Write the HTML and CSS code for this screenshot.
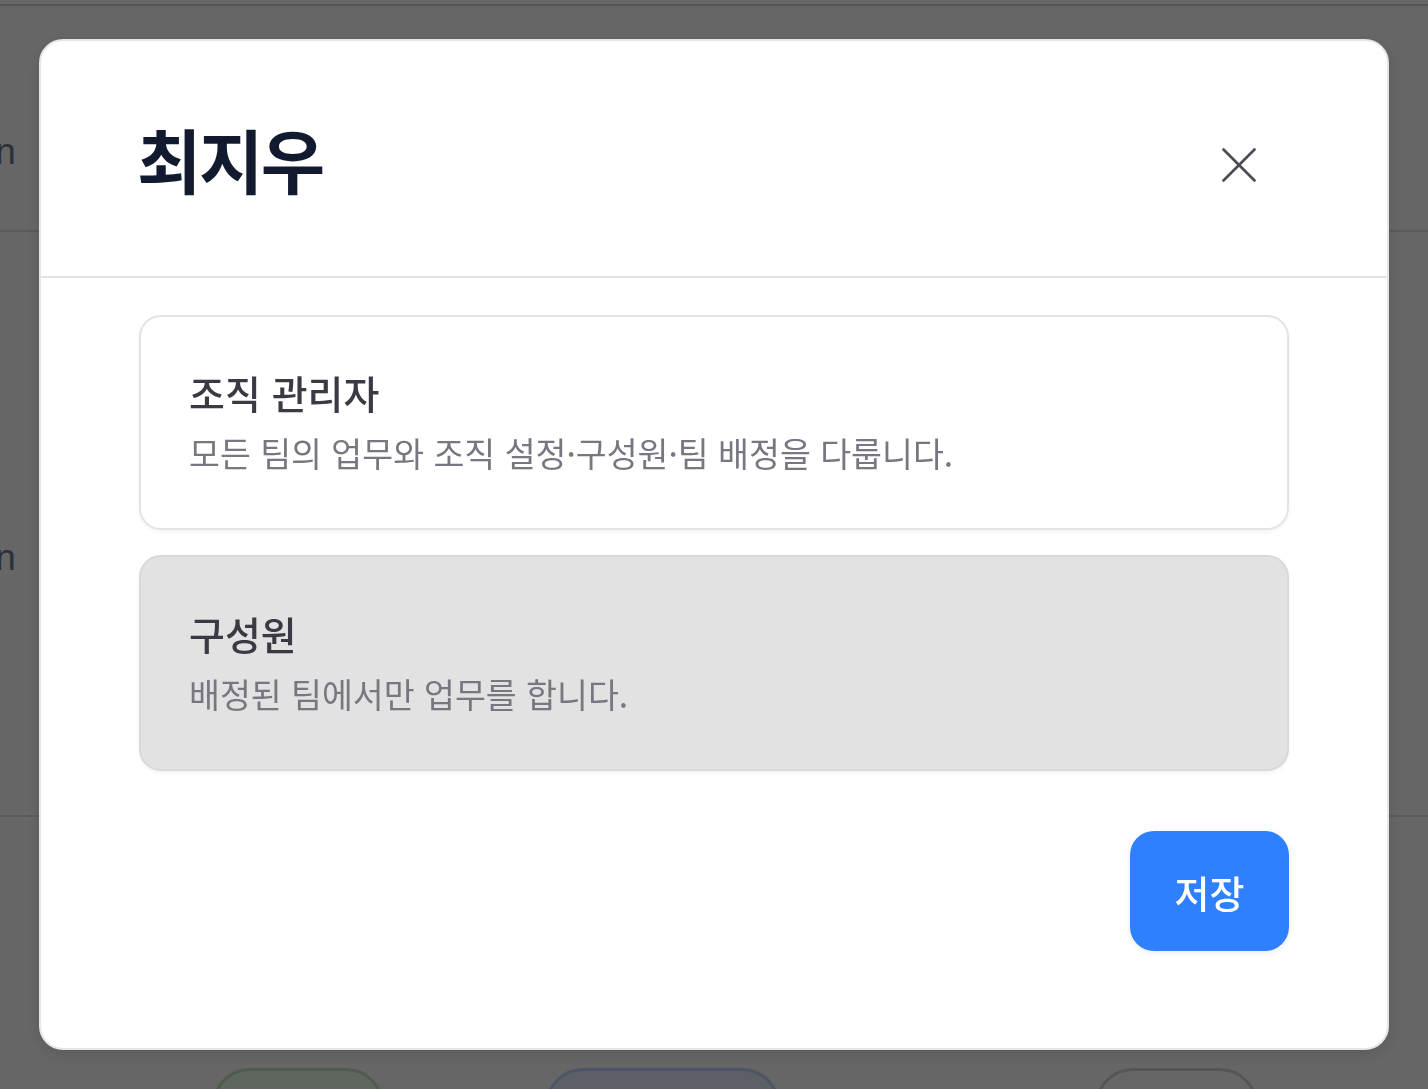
FILE: index.html
```html
<!DOCTYPE html>
<html lang="ko">
<head>
<meta charset="utf-8">
<title>역할 변경</title>
<link rel="stylesheet" href="styles.css">
</head>
<body>
<div class="page">
  <div class="topbar"></div>
  <div class="row row-a"><span class="cell-text">Admin</span></div>
  <div class="row row-b"><span class="cell-text">Admin</span></div>
  <div class="actions">
    <span class="pill pill-green"></span>
    <span class="pill pill-blue"></span>
    <span class="pill pill-gray"></span>
  </div>
</div>

<div class="overlay">
  <div class="modal" role="dialog" aria-modal="true">
    <div class="modal-header">
      <h2 class="modal-title">최지우</h2>
      <button class="close-btn" aria-label="닫기">
        <svg width="34" height="34" viewBox="0 0 34 34" fill="none" stroke="currentColor" stroke-width="2.6" stroke-linecap="round">
          <line x1="1.5" y1="1.5" x2="32.5" y2="32.5"/>
          <line x1="32.5" y1="1.5" x2="1.5" y2="32.5"/>
        </svg>
      </button>
    </div>
    <div class="modal-body">
      <div class="option">
        <div class="option-title">조직 관리자</div>
        <div class="option-desc">모든 팀의 업무와 조직 설정·구성원·팀 배정을 다룹니다.</div>
      </div>
      <div class="option option-selected">
        <div class="option-title">구성원</div>
        <div class="option-desc">배정된 팀에서만 업무를 합니다.</div>
      </div>
    </div>
    <div class="modal-footer">
      <button class="save-btn">저장</button>
    </div>
  </div>
</div>
</body>
</html>
```

FILE: styles.css
```css
* { box-sizing: border-box; }

html, body {
  margin: 0;
  padding: 0;
  height: 100%;
  overflow: hidden;
}

body {
  font-family: "Noto Sans CJK KR", "Noto Sans", sans-serif;
  background: #ffffff;
}

/* background page (dimmed by the overlay) */
.page {
  display: flex;
  flex-direction: column;
  height: 1089px;
  overflow: hidden;
}

.topbar {
  flex-shrink: 0;
  height: 6px;
  border-bottom: 2px solid #d4d4d4;
}

.row {
  flex-shrink: 0;
  display: flex;
  align-items: flex-start;
  border-bottom: 2px solid #e2e2e2;
}

.row-a { height: 226px; }
.row-b { height: 585px; }

.cell-text {
  margin-left: -89px;
  font-family: "Liberation Sans", sans-serif;
  font-size: 37px;
  line-height: 42px;
  color: #6f7a8c;
  white-space: nowrap;
}

.row-a .cell-text { margin-top: 125px; }
.row-b .cell-text { margin-top: 305px; }

.actions {
  flex-shrink: 0;
  height: 272px;
  overflow: hidden;
  display: flex;
  align-items: flex-start;
  padding-top: 251px;
  padding-left: 212px;
}

.pill {
  display: block;
  flex-shrink: 0;
  height: 80px;
  border-radius: 38px;
  border: 3px solid;
}

.pill-green { width: 172px; background: #edffeb; border-color: #c0e6c0; }
.pill-blue { width: 235px; margin-left: 161px; background: #e6edff; border-color: #bbd4ff; }
.pill-gray { width: 163px; margin-left: 315px; background: #ffffff; border-color: #d4d4d4; }

/* overlay + modal */
.overlay {
  position: fixed;
  inset: 0;
  background: rgba(0, 0, 0, 0.6);
  display: flex;
  align-items: center;
  justify-content: center;
}

.modal {
  width: 1350px;
  background: #ffffff;
  border: 2px solid #e6e6e6;
  border-radius: 24px;
  box-shadow: 0 4px 16px rgba(0, 0, 0, 0.12);
  display: flex;
  flex-direction: column;
}

.modal-header {
  height: 237px;
  display: flex;
  align-items: center;
  justify-content: space-between;
  padding: 0 98px 0 96px;
  border-bottom: 2px solid #e4e4e4;
}

.modal-title {
  margin: 0;
  font-size: 70px;
  font-weight: 700;
  letter-spacing: -2.5px;
  color: #111a2e;
  line-height: 1;
}

.close-btn {
  width: 100px;
  height: 100px;
  margin-top: 13px;
  display: flex;
  align-items: center;
  justify-content: center;
  border: none;
  background: transparent;
  color: #4b4b55;
  padding: 0;
  cursor: pointer;
}

.modal-body {
  display: flex;
  flex-direction: column;
  gap: 25px;
  padding: 37px 98px 0;
}

.option {
  height: 215px;
  display: flex;
  flex-direction: column;
  justify-content: center;
  padding: 0 48px;
  border: 2px solid #e4e4e4;
  border-radius: 22px;
  background: #ffffff;
  box-shadow: 0 2px 4px rgba(0, 0, 0, 0.05);
}

.option-selected {
  height: 216px;
  background: #e2e2e2;
  border-color: #d9d9d9;
}

.option-title {
  font-size: 39px;
  font-weight: 500;
  color: #3a3a44;
  line-height: 52px;
}

.option-desc {
  font-size: 33.6px;
  font-weight: 400;
  color: #777782;
  line-height: 52px;
  margin-top: 9px;
}

.modal-footer {
  display: flex;
  justify-content: flex-end;
  padding: 60px 98px 97px;
}

.save-btn {
  width: 159px;
  height: 120px;
  border: none;
  border-radius: 24px;
  background: #2f80ff;
  color: #ffffff;
  font-family: "Noto Sans CJK KR", "Noto Sans", sans-serif;
  font-size: 38px;
  font-weight: 500;
  box-shadow: 0 2px 6px rgba(0, 0, 0, 0.08);
  cursor: pointer;
}
```
